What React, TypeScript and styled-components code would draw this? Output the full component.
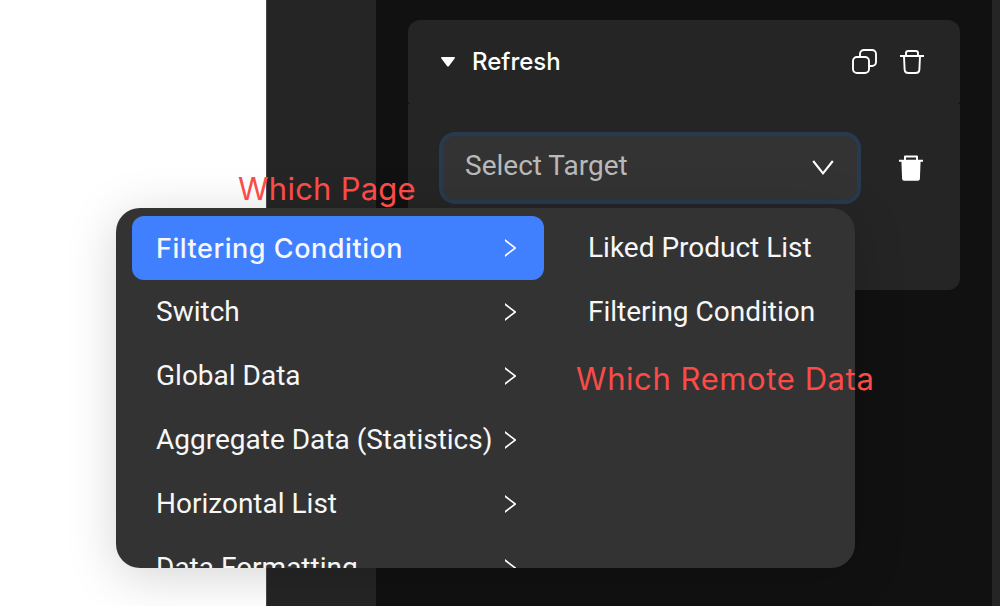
import React from "react";
import styled, { createGlobalStyle } from "styled-components";

const Global = createGlobalStyle`
  * { box-sizing: border-box; }
  body { margin: 0; background: #fff; overflow: hidden; }
  svg { display: block; flex: none; }
`;

const Page = styled.div`
  position: relative;
  display: flex;
  width: 1000px;
  height: 606px;
  overflow: hidden;
  font-family: Roboto, "Liberation Sans", sans-serif;
  color: #fff;
`;
const Canvas = styled.div`
  width: 266px;
  background: #fff;
`;
const Sidebar = styled.div`
  width: 110px;
  background: #252525;
  border-left: 1px solid #484848;
`;
const Panel = styled.div`
  flex: 1;
  background: #111;
  padding: 20px 32px 0;
`;
const Edge = styled.div`
  width: 8px;
  background: #252525;
`;
const Card = styled.section`
  display: flex;
  flex-direction: column;
  height: 270px;
`;
const CardHeader = styled.header`
  display: flex;
  align-items: center;
  height: 84px;
  padding: 0 36px 0 33px;
  background: #252525;
  border-radius: 12px 12px 3px 3px;
`;
const CardTitle = styled.h2`
  flex: 1;
  margin: 0 0 0 17px;
  font: 500 24px/32px Inter, sans-serif;
`;
const HeaderActions = styled.div`
  display: flex;
  gap: 22px;
  margin-top: -1px;
`;
const CardBody = styled.div`
  display: flex;
  align-items: flex-start;
  flex: 1;
  padding: 28px 36px 0 31px;
  background: #252525;
  border-radius: 0 0 12px 12px;
`;
const Select = styled.div`
  display: flex;
  align-items: center;
  width: 422px;
  height: 72px;
  padding: 0 23px 0 22px;
  background: #333;
  border: 4px solid #283a50;
  border-radius: 16px;
`;
const Placeholder = styled.span`
  flex: 1;
  margin-top: -4px;
  font-size: 28px;
  line-height: 36px;
  color: #b9b9b9;
`;
const RemoveButton = styled.div`
  margin: 22px 0 0 38px;
`;
const Menu = styled.div`
  position: absolute;
  left: 116px;
  top: 208px;
  display: flex;
  width: 739px;
  height: 360px;
  overflow: hidden;
  background: #333;
  border-radius: 24px;
`;
const MenuShadow = styled.div`
  position: absolute;
  left: 116px;
  top: 208px;
  width: 739px;
  height: 360px;
  border-radius: 24px;
  box-shadow: 0 8px 50px rgba(0, 0, 0, 0.17);
`;
const Column = styled.div<{ $width: number; $inset: number }>`
  width: ${(p) => p.$width}px;
  padding: 8px 0 0 ${(p) => p.$inset}px;
`;
const Item = styled.div<{ $active?: boolean }>`
  display: flex;
  align-items: center;
  justify-content: space-between;
  height: 64px;
  padding: 0 28px 0 24px;
  border-radius: 12px;
  background: ${(p) => (p.$active ? "#4080ff" : "transparent")};
  color: #f7f7f7;
  font: ${(p) => (p.$active ? "500 27px/36px Inter, sans-serif" : "400 28px/36px Roboto, sans-serif")};
  letter-spacing: ${(p) => (p.$active ? 0.54 : 0)}px;
  white-space: nowrap;
`;
const ItemLabel = styled.span<{ $active?: boolean }>`
  padding-top: ${(p) => (p.$active ? 2 : 0)}px;
`;
const Note = styled.div<{ $x: number; $y: number; $spacing: number }>`
  position: absolute;
  left: ${(p) => p.$x}px;
  top: ${(p) => p.$y}px;
  font: 400 31px/40px Inter, sans-serif;
  letter-spacing: ${(p) => p.$spacing}px;
  color: #fa4b48;
  white-space: nowrap;
`;

const CaretIcon = () => (
  <svg width="14" height="10" viewBox="0 0 14 10">
    <path d="M.7 0h12.6q1 .3.3 1.4L8 8.9q-1 1-2 0L.4 1.4Q-.3.3.7 0z" fill="#fff" />
  </svg>
);
const CopyIcon = () => (
  <svg width="26" height="26" viewBox="0 0 26 26" fill="none" stroke="#fff" strokeWidth="1.9">
    <rect x="1" y="8" width="16" height="16" rx="4" />
    <path d="M8 8V5a4 4 0 0 1 4-4h8a4 4 0 0 1 4 4v8a4 4 0 0 1-4 4h-3" />
  </svg>
);
const TrashIcon = () => (
  <svg width="24" height="26" viewBox="0 0 24 26" fill="none" stroke="#fff" strokeWidth="1.9">
    <path d="M0 7h24M6 7V4.2Q6 2 8.2 2h7.6Q18 2 18 4.2V7M4 7l.6 13.4q.2 3.6 3.8 3.6h7.2q3.6 0 3.8-3.6L20 7" />
  </svg>
);
const TrashSolidIcon = () => (
  <svg width="24" height="28" viewBox="0 0 24 28">
    <path d="M6 6V2.4h12V6M0 6.7h24" fill="none" stroke="#fff" strokeWidth="2" strokeLinejoin="round" />
    <path d="M2.4 7h19.2l-.7 18q-.1 1.8-2.1 1.8H5.2q-2 0-2.1-1.8z" fill="#fff" />
  </svg>
);
const ChevronDown = () => (
  <svg width="22" height="16" viewBox="0 0 22 16">
    <path d="M1.2 1l9.8 12.4L20.8 1" fill="none" stroke="#fff" strokeWidth="2.1" />
  </svg>
);
const ChevronRight = () => (
  <svg width="12" height="20" viewBox="0 0 12 20">
    <path d="M1 1.1L12 9.5V10.5L1 18.9V16.8L9.9 10 1 3.2z" fill="#fff" />
  </svg>
);

const pages = [
  { label: "Filtering Condition", active: true },
  { label: "Switch" },
  { label: "Global Data" },
  { label: "Aggregate Data (Statistics)" },
  { label: "Horizontal List" },
  { label: "Data Formatting" },
];

export default function App() {
  return (
    <Page>
      <Global />
      <Canvas />
      <Sidebar />
      <Panel>
        <Card>
          <CardHeader>
            <CaretIcon />
            <CardTitle>Refresh</CardTitle>
            <HeaderActions>
              <CopyIcon />
              <TrashIcon />
            </HeaderActions>
          </CardHeader>
          <CardBody>
            <Select>
              <Placeholder>Select Target</Placeholder>
              <ChevronDown />
            </Select>
            <RemoveButton>
              <TrashSolidIcon />
            </RemoveButton>
          </CardBody>
        </Card>
      </Panel>
      <Edge />
      <MenuShadow />
      <Note $x={238} $y={169} $spacing={0.25}>Which Page</Note>
      <Menu>
        <Column $width={428} $inset={16}>
          {pages.map((p) => (
            <Item key={p.label} $active={p.active}>
              <ItemLabel $active={p.active}>{p.label}</ItemLabel>
              <ChevronRight />
            </Item>
          ))}
        </Column>
        <Column $width={311} $inset={20}>
          <Item>Liked Product List</Item>
          <Item>Filtering Condition</Item>
        </Column>
      </Menu>
      <Note $x={576} $y={359} $spacing={0.58}>Which Remote Data</Note>
    </Page>
  );
}
